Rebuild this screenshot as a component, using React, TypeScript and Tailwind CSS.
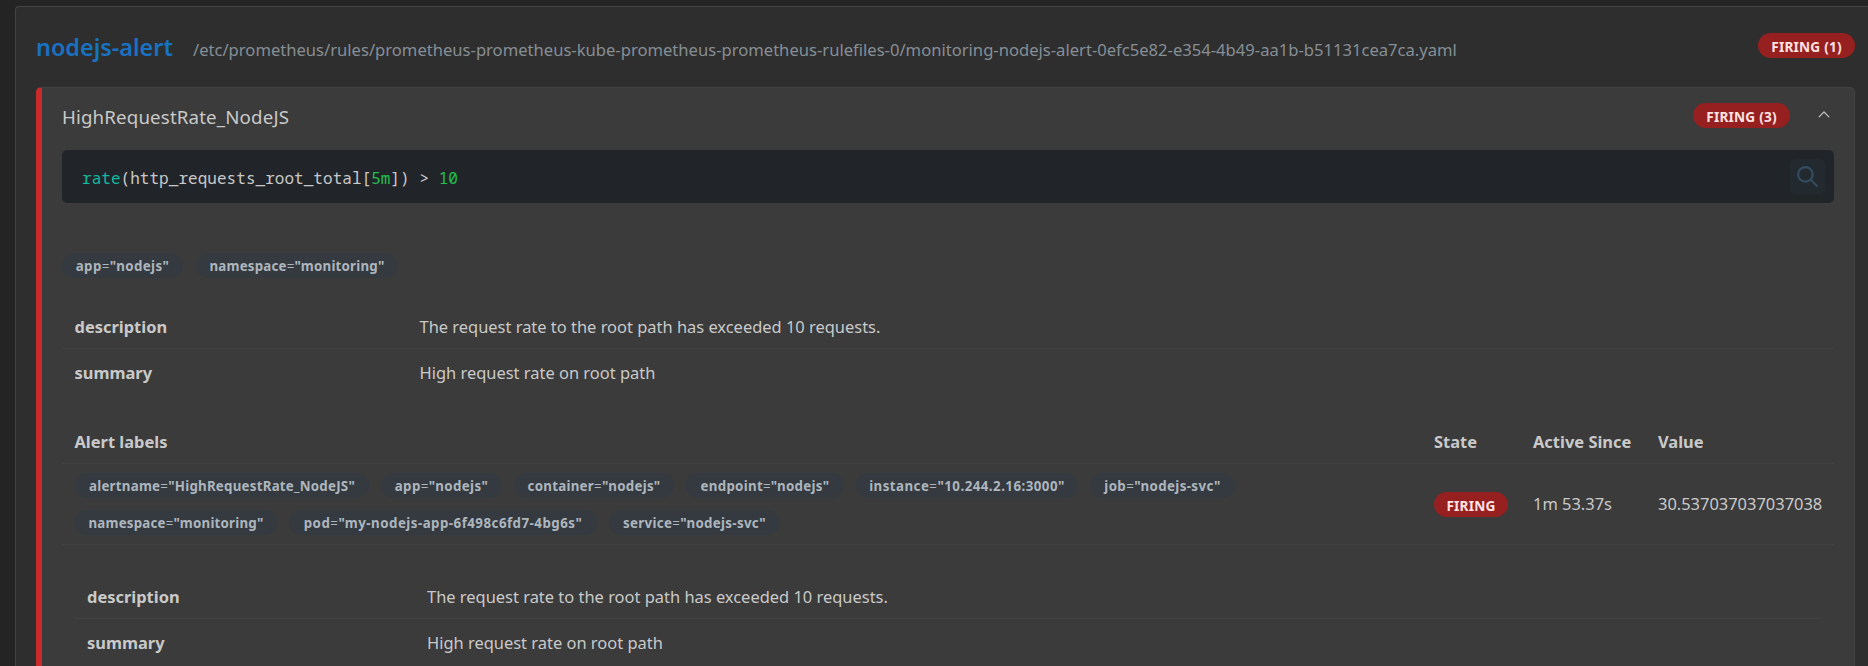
import type { ReactNode } from "react";

type Label = { name: string; value: string; box: string };

const ruleLabels: Label[] = [
  { name: "app", value: "nodejs", box: "w-[121px] tracking-[0.4px]" },
  { name: "namespace", value: "monitoring", box: "w-[202px] tracking-[0.22px]" },
];

const alertLabels: Label[] = [
  { name: "alertname", value: "HighRequestRate_NodeJS", box: "w-[294px] tracking-[0.24px]" },
  { name: "app", value: "nodejs", box: "w-[121px] tracking-[0.4px]" },
  { name: "container", value: "nodejs", box: "w-[160px] tracking-[0.28px]" },
  { name: "endpoint", value: "nodejs", box: "w-[158px] tracking-[0.28px]" },
  { name: "instance", value: "10.244.2.16:3000", box: "w-[222px] tracking-[0.47px]" },
  { name: "job", value: "nodejs-svc", box: "w-[145px] tracking-[0.38px]" },
  { name: "namespace", value: "monitoring", box: "w-[202px] tracking-[0.22px]" },
  { name: "pod", value: "my-nodejs-app-6f498c6fd7-4bg6s", box: "w-[308px] tracking-[0.48px]" },
  { name: "service", value: "nodejs-svc", box: "w-[171px] tracking-[0.32px]" },
];

function LabelBadge({ label }: { label: Label }) {
  return (
    <span
      className={`flex h-[25px] items-center justify-center whitespace-nowrap rounded-full bg-[#343a40] text-[13.3px] font-bold text-[#adb5bd] ${label.box}`}
    >
      {label.name}
      <span className="font-normal">=</span>"{label.value}"
    </span>
  );
}

function StateBadge({ children, className }: { children: ReactNode; className: string }) {
  return (
    <span
      className={`flex h-[25px] items-center justify-center whitespace-nowrap rounded-full bg-[#962020] pt-[2px] text-[13.6px] font-bold tracking-[0.22px] text-[#ffe3e3] ${className}`}
    >
      {children}
    </span>
  );
}

function Annotation({ name, value, className }: { name: string; value: string; className: string }) {
  return (
    <div className={`flex items-center pt-[2px] ${className}`}>
      <div className="shrink-0 font-bold">{name}</div>
      <div>{value}</div>
    </div>
  );
}

const description = "The request rate to the root path has exceeded 10 requests.";
const summary = "High request rate on root path";

export default function App() {
  return (
    <div className="h-[666px] overflow-hidden bg-[#242424] pl-[15px] pt-[6px] font-['Noto_Sans',sans-serif] text-[16.45px] leading-6 text-[#c9c9c9]">
      <div className="h-[700px] rounded-tl-[4px] border-l border-t border-[#424242] bg-[#2e2e2e] pl-5 pr-[13px]">
        <header className="flex h-20 items-center justify-between">
          <div className="flex items-baseline gap-[20px] pt-[2px]">
            <h2 className="text-[23.4px] font-semibold text-[#1971c2]">nodejs-alert</h2>
            <span className="text-[16.6px] text-[#868e96]">
              /etc/prometheus/rules/prometheus-prometheus-kube-prometheus-prometheus-rulefiles-0/monitoring-nodejs-alert-0efc5e82-e354-4b49-aa1b-b51131cea7ca.yaml
            </span>
          </div>
          <StateBadge className="mb-[3px] w-[97px]">FIRING (1)</StateBadge>
        </header>

        <section className="h-[620px] rounded-[5px] border border-l-[6px] border-[#424242] border-l-[#c92a2a] bg-[#3b3b3b] pl-5 pr-5">
          <div className="flex h-[62px] items-center pb-[5px]">
            <h3 className="grow text-[18.7px] tracking-[0.15px]">HighRequestRate_NodeJS</h3>
            <StateBadge className="mb-[2px] w-[97px]">FIRING (3)</StateBadge>
            <svg className="mb-[3px] ml-[25px] mr-[1px] h-[18px] w-[18px]" viewBox="0 0 15 15" fill="currentColor">
              <path d="M3.135 8.842a.45.45 0 0 0 .023.636.45.45 0 0 0 .636-.02L7.5 5.66l3.706 3.798a.45.45 0 1 0 .658-.615l-4-4.2a.5.5 0 0 0-.728 0z" />
            </svg>
          </div>

          <div className="flex h-[53px] items-center justify-between rounded-[5px] bg-[#212529] pl-5 pr-[9px]">
            <code className="pt-[2px] font-['Noto_Sans_Mono','DejaVu_Sans_Mono',monospace] text-[16px] tracking-[0.04px]">
              <span className="text-[#14b8a0]">rate</span>(http_requests_root_total[
              <span className="text-[#22c050]">5m</span>]) &gt; <span className="text-[#22c050]">10</span>
            </code>
            <button className="flex size-[35px] items-center justify-center rounded-[5px] bg-[#22292f]">
              <svg
                className="mb-px size-[25px]"
                viewBox="0 0 24 24"
                fill="none"
                stroke="#354d62"
                strokeWidth="2"
                strokeLinecap="round"
                strokeLinejoin="round"
              >
                <path d="M10 10m-7 0a7 7 0 1 0 14 0a7 7 0 1 0 -14 0" />
                <path d="M21 21l-6 -6" />
              </svg>
            </button>
          </div>

          <div className="mt-[50px] flex gap-[13px]">
            {ruleLabels.map((label) => (
              <LabelBadge key={label.name} label={label} />
            ))}
          </div>

          <div className="mt-[26px]">
            <Annotation
              name="description"
              value={description}
              className="h-[45px] border-b border-[#424242] pl-[12.5px] *:first:w-[345px]"
            />
            <Annotation name="summary" value={summary} className="h-[45px] pl-[12.5px] *:first:w-[345px]" />
          </div>

          <div className="mt-[25px] grid grid-cols-[1372px_99px_125px_1fr]">
            <div className="col-span-4 grid h-[45px] grid-cols-subgrid items-center border-b border-[#424242] pt-[2px] font-bold">
              <div className="pl-[12.5px]">Alert labels</div>
              <div>State</div>
              <div>Active Since</div>
              <div>Value</div>
            </div>
            <div className="col-span-4 grid h-[81px] grid-cols-subgrid items-center border-b border-[#424242]">
              <div className="flex max-w-[1200px] flex-wrap gap-3 pl-[13px]">
                {alertLabels.map((label) => (
                  <LabelBadge key={label.name} label={label} />
                ))}
              </div>
              <StateBadge className="mt-px w-[74px]">FIRING</StateBadge>
              <div>1m 53.37s</div>
              <div>30.537037037037038</div>
            </div>
          </div>

          <div className="ml-[13px] mr-3 mt-[29px]">
            <Annotation
              name="description"
              value={description}
              className="h-[45px] border-b border-[#424242] pl-3 *:first:w-[340px]"
            />
            <Annotation name="summary" value={summary} className="h-[46px] pl-3 *:first:w-[340px]" />
          </div>
        </section>
      </div>
    </div>
  );
}
